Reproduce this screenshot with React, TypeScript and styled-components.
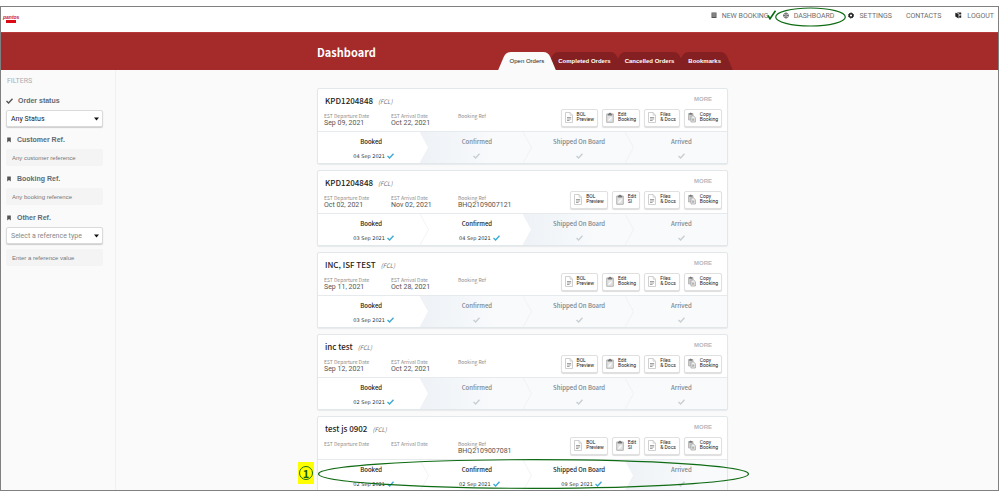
import React from "react";
import styled, { createGlobalStyle, css } from "styled-components";

const heading = `"Noto Sans CJK SC", "Noto Sans", sans-serif`;
const body = `Roboto, "Liberation Sans", sans-serif`;
const arial = `"Liberation Sans", Arial, sans-serif`;

const GlobalStyle = createGlobalStyle`
  * { box-sizing: border-box; }
  body { margin: 0; background: #fff; font-family: ${body}; font-size: 7px; color: #555; }
  button, input, select { font-family: inherit; font-size: inherit; margin: 0; }
  h1, h2, p, dl, dt, dd, ul, ol { margin: 0; padding: 0; font-weight: inherit; }
`;

const Page = styled.div`
  height: 100vh;
  padding: 6px 0 2px;
`;

const Frame = styled.div`
  height: 100%;
  border: 1px solid #808080;
  background: #fafafa;
  overflow: hidden;
  display: flex;
  flex-direction: column;
`;

const Header = styled.header`
  flex: none;
  height: 25px;
  padding: 0 4px 8px 2px;
  display: flex;
  align-items: center;
  justify-content: space-between;
  background: #fff;
`;

const Brand = styled.a`
  display: flex;
  flex-direction: column;
  align-items: center;
  padding-top: 6px;
  color: #c8154a;
  font: italic bold 5px/6px ${arial};
  text-decoration: none;
`;

const BrandBar = styled.span`
  width: 10px;
  height: 3px;
  background: #dc0a14;
`;

const Nav = styled.nav`
  display: flex;
  align-items: center;
`;

const NavLink = styled.a<{ $gap: number }>`
  position: relative;
  display: flex;
  align-items: center;
  gap: 5px;
  margin-left: ${(p) => p.$gap}px;
  color: #6e6e6e;
  line-height: 10px;
  text-decoration: none;
  white-space: nowrap;
  svg { flex: none; }
`;

const NavRing = styled.svg`
  position: absolute;
  left: -8px;
  top: -4px;
  width: 71px;
  height: 20px;
`;

const NavTick = styled.svg`
  position: absolute;
  right: -8px;
  top: -1px;
`;

const Banner = styled.div`
  flex: none;
  height: 38px;
  padding: 0 270px 0 316px;
  display: flex;
  justify-content: space-between;
  background: #a52a2a;
  border-top: 1px solid #b8393b;
`;

const Title = styled.h1`
  color: #fff;
  font: bold 11px/38px ${heading};
`;

const Tabs = styled.div`
  display: flex;
  align-self: flex-end;
`;

const Tab = styled.button<{ $active?: boolean }>`
  position: relative;
  z-index: ${(p) => (p.$active ? 2 : 1)};
  isolation: isolate;
  height: 18px;
  padding: 0 7px;
  border: 0;
  background: none;
  color: ${(p) => (p.$active ? "#222" : "#fff")};
  font: ${(p) => (p.$active ? 400 : 700)} 6px/18px ${arial};
  white-space: nowrap;
  &::before, &::after {
    content: "";
    position: absolute;
    z-index: -1;
    top: 0;
    bottom: 0;
    width: 60%;
    background: ${(p) => (p.$active ? "#fafafa" : "#842022")};
  }
  &::before { left: -1px; transform: skewX(-23deg); border-radius: 5px 0 0 0; }
  &::after { right: -1px; transform: skewX(23deg); border-radius: 0 5px 0 0; }
`;

const Content = styled.div`
  flex: 1;
  min-height: 0;
  display: flex;
`;

const Sidebar = styled.aside`
  flex: none;
  width: 115px;
  border-right: 1px solid #eff0f2;
  padding-right: 12px;
`;

const SideTitle = styled.p`
  padding-left: 6px;
  color: #a9adb5;
  line-height: 22px;
`;

const Field = styled.div`
  padding-left: 5px;
  margin-bottom: 4px;
`;

const FieldLabel = styled.label`
  display: flex;
  align-items: center;
  gap: 5px;
  height: 18px;
  color: #606b75;
  font: bold 7px/18px ${arial};
`;

const SelectBox = styled.div`
  display: grid;
  align-items: center;
  margin-bottom: 3px;
  svg { grid-area: 1 / 1; justify-self: end; margin-right: 4px; pointer-events: none; }
  & + input { margin-top: 5px; }
`;

const Select = styled.select<{ $muted?: boolean }>`
  grid-area: 1 / 1;
  appearance: none;
  width: 100%;
  height: 17px;
  padding: 0 16px 0 4px;
  border: 1px solid #dadada;
  border-radius: 2px;
  background: #fff;
  box-shadow: 0 1px 1px #ccc;
  color: ${(p) => (p.$muted ? "#888" : "#222")};
`;

const TextBox = styled.input`
  display: block;
  width: 100%;
  height: 17px;
  padding: 0 6px;
  border: 0;
  border-radius: 2px;
  background: #f4f4f4;
  color: #555;
  font: 6px ${arial};
  &::placeholder { color: #74787c; opacity: 1; }
`;

const Orders = styled.main`
  flex: 1;
  min-width: 0;
  padding: 18px 270px 0 201px;
  display: flex;
  flex-direction: column;
  gap: 6px;
`;

const Card = styled.article`
  flex: none;
  background: #fff;
  border: 1px solid #e2e7ea;
  border-radius: 2px;
  box-shadow: 0 1px 1px #e6eaed;
`;

const CardTop = styled.div`
  height: 42px;
  padding: 3px 5px 0 6px;
  display: flex;
  justify-content: space-between;
`;

const CardTitle = styled.h2`
  display: flex;
  align-items: baseline;
  gap: 5px;
  padding-left: 1px;
  color: #222;
  font: 500 8px/17px ${heading};
`;

const Mode = styled.span`
  color: #777;
  font: italic 6px/17px ${heading};
`;

const Facts = styled.dl`
  display: flex;
`;

const Fact = styled.div`
  width: 67px;
  white-space: nowrap;
`;

const FactName = styled.dt`
  margin-top: 2px;
  color: #8e8e8e;
  font: 5px/8px ${heading};
`;

const FactValue = styled.dd`
  color: #555;
  line-height: 7px;
`;

const Side = styled.div`
  display: flex;
  flex-direction: column;
  align-items: flex-end;
  gap: 3px;
`;

const MoreButton = styled.button`
  margin-right: 10px;
  padding: 0;
  border: 0;
  background: none;
  color: #b4b8bf;
  font: bold 6px/14px ${arial};
`;

const Actions = styled.div`
  display: flex;
  gap: 4px;
`;

const ActionButton = styled.button`
  display: flex;
  align-items: center;
  gap: 4px;
  height: 18px;
  padding: 0 3px 2px;
  border: 1px solid #e0e0e0;
  border-radius: 2px;
  background: #fff;
  box-shadow: 0 1px 1px #ddd;
  color: #222;
  font-size: 5px;
  line-height: 5px;
  text-align: left;
  svg { flex: none; }
`;

const ActionText = styled.span`
  white-space: pre;
`;

const Progress = styled.ol`
  position: relative;
  display: grid;
  grid-template-columns: repeat(4, 1fr);
  height: 32px;
  border-top: 1px solid #e6eaed;
  list-style: none;
`;

const Stage = styled.li<{ $state: "done" | "next" | "later" }>`
  position: relative;
  padding: 4px 0 0 11px;
  display: flex;
  flex-direction: column;
  align-items: center;
  gap: 2px;
  color: ${(p) => (p.$state === "done" ? "#222" : "#7d848a")};
  &:first-child { padding-left: 4px; }
  ${(p) =>
    p.$state === "done"
      ? css`background: #fff;`
      : p.$state === "next"
      ? css`background: linear-gradient(90deg, #eef2f6, #f8fafc 70%);`
      : css`background: #f8fafc;`}
`;

const StageName = styled.span`
  font: 500 6px/12px ${heading};
`;

const StageDate = styled.span<{ $done: boolean }>`
  display: flex;
  align-items: center;
  gap: 2px;
  height: 12px;
  padding-left: ${(p) => (p.$done ? 5 : 0)}px;
  color: #333;
  font: 5px "DejaVu Sans", Verdana, sans-serif;
`;

const StageArrow = styled.svg`
  position: absolute;
  z-index: 1;
  left: 100%;
  top: 0;
  width: 9px;
  height: 100%;
`;

const ProgressRing = styled.svg`
  position: absolute;
  z-index: 2;
  left: 0;
  top: -1px;
  width: calc(100% + 22px);
  height: 30px;
  overflow: visible;
  pointer-events: none;
`;

const StepMarker = styled.span`
  position: absolute;
  left: -20px;
  top: 2px;
  width: 16px;
  height: 22px;
  display: grid;
  place-items: center;
  background: #ff0;
`;

const StepNumber = styled.span`
  width: 14px;
  height: 14px;
  border: 1px solid #1c6b1c;
  border-radius: 50%;
  color: #145c14;
  font: bold 11px/12px ${heading};
  text-align: center;
`;

const Tick = ({ color }: { color: string }) => (
  <svg width="7" height="6" viewBox="0 0 7 6" fill="none" stroke={color} strokeWidth="1.4">
    <path d="M.5 3 2.600 5 6.500.8" />
  </svg>
);

const Flag = () => (
  <svg width="6" height="6" viewBox="0 0 6 6" fill="#555">
    <path d="M1.200.5h3.600v5L3 4 1.200 5.500z" />
  </svg>
);

const Caret = () => (
  <svg width="5" height="4" viewBox="0 0 5 4" fill="#111">
    <path d="M0 .5h5L2.500 3.500z" />
  </svg>
);

const BookIcon = () => (
  <svg width="6" height="7" viewBox="0 0 6 7">
    <path d="M.5.5h5v5.500h-5z" fill="#555" />
    <path d="M1.200 2h3.600M1.200 4h3.600" stroke="#ddd" strokeWidth=".7" />
  </svg>
);

const GlobeIcon = () => (
  <svg width="6" height="7" viewBox="0 0 6 7" fill="none" stroke="#555" strokeWidth=".8">
    <circle cx="3" cy="3.500" r="2.400" />
    <circle cx="3" cy="3.500" r=".9" />
    <path d="M3 .5v2M3 4.500v2M.3 3.500h1.800M3.900 3.500h1.800" />
  </svg>
);

const GearIcon = () => (
  <svg width="6" height="7" viewBox="0 0 6 7" fill="none" stroke="#222">
    <circle cx="3" cy="3.500" r="2.500" strokeWidth="1" strokeDasharray="1.200 .76" />
    <circle cx="3" cy="3.500" r="1.800" strokeWidth="1.400" />
  </svg>
);

const ExitIcon = () => (
  <svg width="7" height="7" viewBox="0 0 7 7" fill="#222">
    <path d="M.3.800 3.600 1.800v4.800L.3 4.600z" />
    <path d="M1.500.4h4.700v2.200H4.200V1.400zM4.200 3.800 6.200 3.200v2.600h-2z" />
  </svg>
);

const FileIcon = () => (
  <svg width="8" height="11" viewBox="0 0 8 11" fill="none" stroke="#c4c4c4">
    <path d="M.5.5h4.600l2.400 2.700v7.300h-7z" strokeWidth=".8" />
    <path d="M5.100.5v2.700h2.400" strokeWidth=".7" />
    <path d="M2 5.500h4.200M2 7h4.200M2 8.500h2.600" stroke="#999" strokeWidth=".9" />
  </svg>
);

const ClipboardIcon = () => (
  <svg width="8" height="11" viewBox="0 0 8 11">
    <path d="M.7 2h6.600v8.300H.7z" fill="#e2e2e2" stroke="#b5b5b5" strokeWidth="1" />
    <path d="M1.800 3.600V1.700h1C3 .3 5 .3 5.200 1.700h1v1.900z" fill="#777" />
    <path d="M2.500 8.600 5.500 5.400" stroke="#fff" strokeWidth="1.2" />
  </svg>
);

const CopyIcon = () => (
  <svg width="8" height="11" viewBox="0 0 8 11">
    <path d="M.5 1.500h4.500v6.500H.5z" fill="#ccc" stroke="#b0b0b0" strokeWidth=".8" />
    <path d="M1.200 2.700V1.200h.8c.2-.9 1.200-.9 1.400 0h.9v1.500z" fill="#777" />
    <path d="M3 4h2.700l1.700 1.700v4.300H3z" fill="#eee" stroke="#a5a5a5" strokeWidth=".8" />
    <path d="M4 6.500h2.300V8.800H4z" fill="#b5b5b5" />
  </svg>
);

type Order = {
  title: string;
  departure?: string;
  arrival?: string;
  booking?: string;
  edit: string;
  dates: string[];
  marked?: boolean;
};

const orders: Order[] = [
  { title: "KPD1204848", departure: "Sep 09, 2021", arrival: "Oct 22, 2021", edit: "Booking", dates: ["04 Sep 2021"] },
  { title: "KPD1204848", departure: "Oct 02, 2021", arrival: "Nov 02, 2021", booking: "BHQ2109007121", edit: "SI", dates: ["03 Sep 2021", "04 Sep 2021"] },
  { title: "INC, ISF TEST", departure: "Sep 11, 2021", arrival: "Oct 28, 2021", edit: "Booking", dates: ["03 Sep 2021"] },
  { title: "inc test", departure: "Sep 12, 2021", arrival: "Oct 22, 2021", edit: "Booking", dates: ["02 Sep 2021"] },
  { title: "test js 0902", booking: "BHQ2109007081", edit: "SI", dates: ["02 Sep 2021", "02 Sep 2021", "09 Sep 2021"], marked: true },
];

const stageNames = ["Booked", "Confirmed", "Shipped On Board", "Arrived"];

const OrderCard = ({ order }: { order: Order }) => (
  <Card>
    <CardTop>
      <div>
        <CardTitle>
          {order.title} <Mode>(FCL)</Mode>
        </CardTitle>
        <Facts>
          <Fact><FactName>EST Departure Date</FactName><FactValue>{order.departure}</FactValue></Fact>
          <Fact><FactName>EST Arrival Date</FactName><FactValue>{order.arrival}</FactValue></Fact>
          <Fact><FactName>Booking Ref</FactName><FactValue>{order.booking}</FactValue></Fact>
        </Facts>
      </div>
      <Side>
        <MoreButton type="button">MORE</MoreButton>
        <Actions>
          <ActionButton type="button"><FileIcon /><ActionText>{"BOL\nPreview"}</ActionText></ActionButton>
          <ActionButton type="button"><ClipboardIcon /><ActionText>{`Edit\n${order.edit}`}</ActionText></ActionButton>
          <ActionButton type="button"><FileIcon /><ActionText>{"Files\n& Docs"}</ActionText></ActionButton>
          <ActionButton type="button"><CopyIcon /><ActionText>{"Copy\nBooking"}</ActionText></ActionButton>
        </Actions>
      </Side>
    </CardTop>
    <Progress>
      {stageNames.map((name, i) => {
        const done = i < order.dates.length;
        const state = done ? "done" : i === order.dates.length ? "next" : "later";
        return (
          <Stage key={name} $state={state}>
            <StageName>{name}</StageName>
            <StageDate $done={done}>
              {order.dates[i]}
              <Tick color={done ? "#3fa9d6" : "#c9ced2"} />
            </StageDate>
            {i < 3 && (
              <StageArrow viewBox="0 0 9 32" preserveAspectRatio="none">
                <path d="M0 0 8.500 16 0 32z" fill={done ? "#fff" : "#f8fafc"} />
                <path d="M0 0 8.500 16 0 32" fill="none" stroke="#edf0f3" strokeWidth=".8" />
              </StageArrow>
            )}
          </Stage>
        );
      })}
      {order.marked && (
        <>
          <ProgressRing viewBox="0 0 431 31" preserveAspectRatio="none" fill="none" stroke="#0f6b14" strokeWidth="1.2">
            <ellipse cx="215.500" cy="15.500" rx="215" ry="14.800" />
          </ProgressRing>
          <StepMarker><StepNumber>1</StepNumber></StepMarker>
        </>
      )}
    </Progress>
  </Card>
);

export default function App() {
  return (
    <Page>
      <GlobalStyle />
      <Frame>
        <Header>
          <Brand href="#">pantos<BrandBar /></Brand>
          <Nav>
            <NavLink href="#" $gap={0}>
              <BookIcon />NEW BOOKING
              <NavTick width="10" height="10" viewBox="0 0 10 10" fill="none" stroke="#0b6b12" strokeWidth="1.6">
                <path d="M1 5.500 3 8.800 8.500.8" />
              </NavTick>
            </NavLink>
            <NavLink href="#" $gap={14}>
              <GlobeIcon />DASHBOARD
              <NavRing viewBox="0 0 71 20" fill="none" stroke="#0f6b14" strokeWidth="1.2">
                <ellipse cx="35.500" cy="10" rx="34.800" ry="9" />
              </NavRing>
            </NavLink>
            <NavLink href="#" $gap={14}><GearIcon />SETTINGS</NavLink>
            <NavLink href="#" $gap={14}>CONTACTS</NavLink>
            <NavLink href="#" $gap={14}><ExitIcon />LOGOUT</NavLink>
          </Nav>
        </Header>
        <Banner>
          <Title>Dashboard</Title>
          <Tabs role="tablist">
            <Tab type="button" role="tab" aria-selected $active>Open Orders</Tab>
            <Tab type="button" role="tab">Completed Orders</Tab>
            <Tab type="button" role="tab">Cancelled Orders</Tab>
            <Tab type="button" role="tab">Bookmarks</Tab>
          </Tabs>
        </Banner>
        <Content>
          <Sidebar>
            <SideTitle>FILTERS</SideTitle>
            <Field>
              <FieldLabel htmlFor="status"><Tick color="#555" />Order status</FieldLabel>
              <SelectBox>
                <Select id="status"><option>Any Status</option></Select>
                <Caret />
              </SelectBox>
            </Field>
            <Field>
              <FieldLabel htmlFor="customer"><Flag />Customer Ref.</FieldLabel>
              <TextBox id="customer" placeholder="Any customer reference" />
            </Field>
            <Field>
              <FieldLabel htmlFor="booking"><Flag />Booking Ref.</FieldLabel>
              <TextBox id="booking" placeholder="Any booking reference" />
            </Field>
            <Field>
              <FieldLabel htmlFor="other"><Flag />Other Ref.</FieldLabel>
              <SelectBox>
                <Select id="other" $muted><option>Select a reference type</option></Select>
                <Caret />
              </SelectBox>
              <TextBox aria-label="Reference value" placeholder="Enter a reference value" />
            </Field>
          </Sidebar>
          <Orders>
            {orders.map((order, i) => <OrderCard key={i} order={order} />)}
          </Orders>
        </Content>
      </Frame>
    </Page>
  );
}
